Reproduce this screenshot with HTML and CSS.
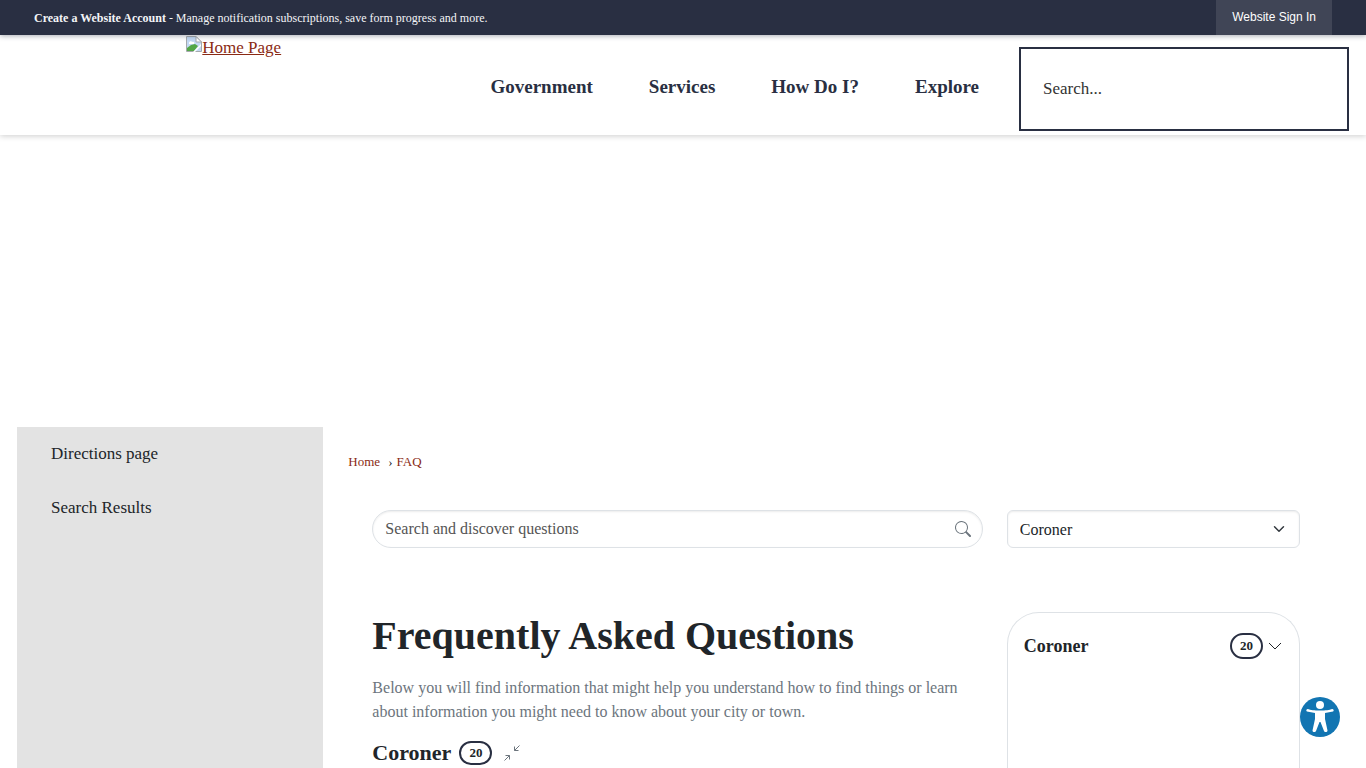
FILE: index.html
```
<!DOCTYPE html>
<html lang="en">
<head>
    <meta charset="UTF-8">
    <meta name="viewport" content="width=device-width, initial-scale=1.0">
    <title>FAQ - Coroner</title>
    <link rel="stylesheet" href="styles.css">
</head>
<body>

    <div class="top-bar">
        <p><a href="#"><strong>Create a Website Account</strong></a> - Manage notification subscriptions, save form progress and more.</p>
        <a class="sign-in" href="#">Website Sign In</a>
    </div>

    <header class="site-header">
        <a class="logo" href="#">
            <svg width="16" height="16" viewBox="0 0 16 16" aria-hidden="true">
                <path d="M.5 15.500V.5H10L15.500 6V15.500Z" fill="#fff" stroke="#a5a9ad"/>
                <path d="M1 1H10V6H15V15H1Z" fill="#c3d9f4"/>
                <path d="M3 7c0-2 3-2 3-1 2-1 3 1 2 2H3Z" fill="#fff"/>
                <path d="M1 15V12L5 9 9 8 12 10 8 15Z" fill="#53a747"/>
                <path d="M7 16L15 8V10L9 16Z" fill="#fff"/>
                <path d="M10 .5V6H15.500Z" fill="#fff" stroke="#a5a9ad"/>
            </svg><span>Home Page</span>
        </a>
        <nav class="main-nav">
            <a href="#">Government</a>
            <a href="#">Services</a>
            <a href="#">How Do I?</a>
            <a href="#">Explore</a>
        </nav>
        <input class="site-search" type="text" placeholder="Search..." aria-label="Search">
    </header>

    <div class="banner"></div>

    <div class="page">
        <aside class="side-nav">
            <a href="#">Directions page</a>
            <a href="#">Search Results</a>
        </aside>

        <main class="content">
            <nav class="breadcrumb" aria-label="Breadcrumb">
                <a href="#">Home</a><span>›</span><a href="#">FAQ</a>
            </nav>

            <div class="faq">
                <div class="question-search">
                    <input type="text" placeholder="Search and discover questions" aria-label="Search and discover questions">
                    <button type="button" aria-label="Search questions">
                        <svg width="16" height="16" viewBox="0 0 16 16" fill="currentColor">
                            <path d="M11.742 10.344a6.500 6.500 0 1 0-1.397 1.398h-.001q.044.060.098.115l3.850 3.850a1 1 0 0 0 1.415-1.414l-3.850-3.850a1 1 0 0 0-.115-.1zM12 6.500a5.500 5.500 0 1 1-11 0 5.500 5.500 0 0 1 11 0"/>
                        </svg>
                    </button>
                </div>
                <select class="category-select" aria-label="Category">
                    <option>Coroner</option>
                </select>

                <section class="questions">
                    <h1>Frequently Asked Questions</h1>
                    <p>Below you will find information that might help you understand how to find things or learn about information you might need to know about your city or town.</p>
                    <div class="category-title">
                        <h2>Coroner</h2>
                        <span class="badge">20</span>
                        <button type="button" aria-label="Collapse all">
                            <svg width="16" height="16" viewBox="0 0 16 16" fill="none" stroke="currentColor">
                                <path d="M15.500 .5L10.500 5.500M10.500 1.500V5.500H14.500M.5 15.500L5.500 10.500M1.500 10.500H5.500V14.500"/>
                            </svg>
                        </button>
                    </div>
                </section>

                <section class="category-card">
                    <button type="button">
                        <span class="card-name">Coroner</span>
                        <span class="badge">20</span>
                        <svg width="16" height="16" viewBox="0 0 16 16" fill="none" stroke="currentColor">
                            <path d="M2 5L8 11L14 5"/>
                        </svg>
                    </button>
                </section>
            </div>
        </main>
    </div>

    <button class="accessibility" type="button" aria-label="Accessibility options">
        <svg width="40" height="40" viewBox="0 0 40 40">
            <circle cx="20" cy="20" r="20" fill="#1275b2"/>
            <circle cx="20" cy="8" r="4" fill="#fff"/>
            <path d="M7.500 12C11 13 14 13.500 20 13.500S29 13 32.500 12C34 12 34 14.500 33 14.500L25 16V22L27.500 33.500C27.500 35.500 24.500 35.500 24 34L20.500 25H19.500L16 34C15.500 35.500 12.500 35.500 12.500 33.500L15 22V16L7 14.500C6 14.500 6 12 7.500 12Z" fill="#fff"/>
        </svg>
    </button>

</body>
</html>
```

FILE: styles.css
```
* {
    box-sizing: border-box;
}
body {
    margin: 0;
    min-height: 100vh;
    display: flex;
    flex-direction: column;
    font-family: "Liberation Serif", "Times New Roman", serif;
    font-size: 16px;
    line-height: 24px;
    color: #212529;
    background-color: #fff;
}
a {
    color: #8a2a14;
    text-decoration: none;
}
button {
    padding: 0;
    border: none;
    background: none;
    font-family: inherit;
    color: inherit;
    cursor: pointer;
}
svg {
    display: block;
}

/* top bar */
.top-bar {
    position: relative;
    flex: none;
    display: flex;
    align-items: center;
    justify-content: space-between;
    height: 35px;
    padding: 0 34px;
    background-color: #292f42;
    box-shadow: 0 1px 5px rgba(41, 47, 66, 0.4);
    color: #f4f5f8;
    font-size: 12px;
}
.top-bar p {
    margin: 0;
}
.top-bar p a {
    color: inherit;
}
.sign-in {
    padding: 0 16px;
    background-color: #404556;
    color: #fff;
    font-family: "Liberation Sans", Arial, sans-serif;
    line-height: 35px;
}

/* header */
.site-header {
    flex: none;
    display: grid;
    grid-template-columns: 1fr auto 330px;
    column-gap: 40px;
    height: 100px;
    padding: 0 17px;
    box-shadow: 0 1px 6px rgba(0, 0, 0, 0.2);
}
.logo {
    display: flex;
    justify-self: center;
    align-self: start;
    padding-top: 1px;
    font-size: 17px;
    text-decoration: underline;
}
.main-nav {
    display: flex;
    gap: 56px;
    align-items: center;
    padding-top: 4px;
}
.main-nav a {
    color: #292f42;
    font-size: 19px;
    font-weight: bold;
}
.site-search {
    margin-top: 12px;
    width: 100%;
    height: 84px;
    padding: 0 22px;
    border: 2px solid #292f42;
    font: inherit;
    font-size: 17px;
}
input::placeholder {
    color: #333;
    opacity: 1;
}

.banner {
    flex: none;
    height: 292px;
}

/* columns */
.page {
    flex: 1;
    display: grid;
    grid-template-columns: 23% 1fr;
    padding: 0 17px;
}
.side-nav {
    display: flex;
    flex-direction: column;
    gap: 30px;
    padding: 15px 34px;
    background-color: #e3e3e3;
}
.side-nav a {
    color: #212529;
    font-size: 17px;
}
.content {
    display: flex;
    flex-direction: column;
    padding: 23px 25px 0;
}
.breadcrumb {
    font-size: 13px;
}
.breadcrumb span {
    margin: 0 4px 0 8px;
}

/* faq */
.faq {
    flex: 1;
    display: grid;
    grid-template-columns: repeat(12, 1fr);
    grid-template-rows: auto 1fr;
    column-gap: 24px;
    row-gap: 64px;
    padding: 36px 24px 0;
}
.question-search,
.questions {
    grid-column: span 8;
}
.category-select,
.category-card {
    grid-column: span 4;
}
.question-search {
    position: relative;
}
.question-search input,
.category-select {
    width: 100%;
    height: 38px;
    padding: 0 12px;
    border: 1px solid #dee2e6;
    background-color: #fff;
    box-shadow: inset 0 1px 2px rgba(0, 0, 0, 0.08);
    color: #212529;
    font-family: inherit;
    font-size: 16px;
}
.question-search input {
    border-radius: 19px;
}
.question-search input::placeholder {
    color: #555;
}
.question-search button {
    position: absolute;
    top: 11px;
    right: 12px;
    color: #6c757d;
}
.category-select {
    appearance: none;
    border-radius: 6px;
    background-image: url("data:image/svg+xml,%3csvg xmlns='http://www.w3.org/2000/svg' viewBox='0 0 16 16'%3e%3cpath fill='none' stroke='%23343a40' stroke-linecap='round' stroke-linejoin='round' stroke-width='2' d='m2 5 6 6 6-6'/%3e%3c/svg%3e");
    background-repeat: no-repeat;
    background-position: right 14px center;
    background-size: 12px;
}
.questions h1 {
    margin: 0 0 16px;
    font-size: 40px;
    line-height: 48px;
}
.questions p {
    margin: 0 0 16px;
    color: #6c757d;
}
.category-title {
    display: flex;
    align-items: center;
    gap: 8px;
}
.category-title h2 {
    margin: 0;
    font-size: 22px;
    line-height: 26px;
}
.category-title button {
    margin-left: 4px;
    color: #6c757d;
}
.badge {
    padding: 0 8px;
    border: 2px solid #292f42;
    border-radius: 13px;
    font-size: 13px;
    font-weight: bold;
    line-height: 20px;
}
.category-card {
    padding: 20px 16px 0;
    border: 1px solid #dee2e6;
    border-bottom: none;
    border-radius: 32px 32px 0 0;
}
.category-card button {
    display: flex;
    align-items: center;
    gap: 4px;
    width: 100%;
    font-size: 18px;
    font-weight: bold;
}
.card-name {
    flex: 1;
    text-align: left;
}
.category-card .badge {
    line-height: 22px;
}

.accessibility {
    position: fixed;
    right: 26px;
    bottom: 31px;
}
```
